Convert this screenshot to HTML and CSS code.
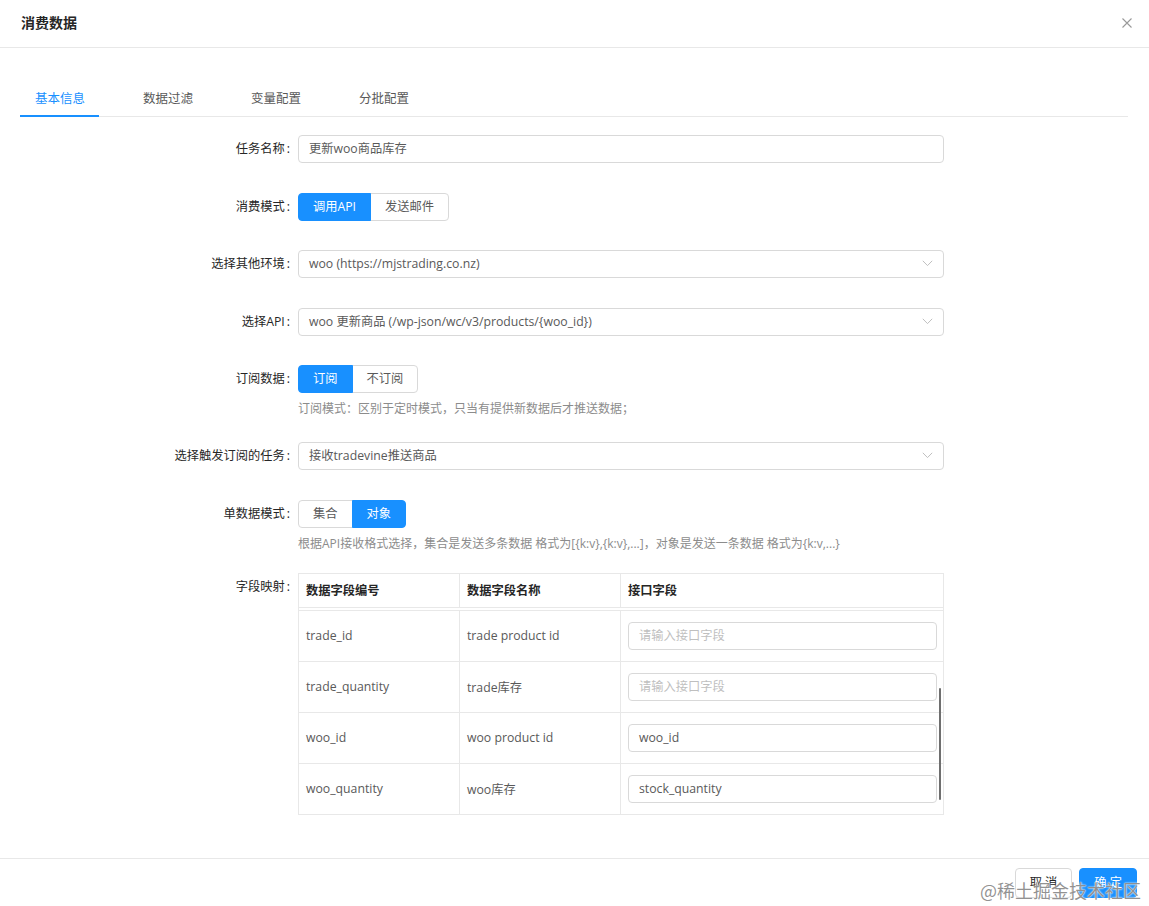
FILE: index.html
```html
<!DOCTYPE html>
<html lang="zh-CN">
<head>
<meta charset="utf-8">
<title>消费数据</title>
<link rel="stylesheet" href="styles.css">
</head>
<body>
<div class="modal">
  <div class="modal-header">
    <div class="modal-title">消费数据</div>
    <span class="modal-close" aria-label="close">
      <svg width="12" height="12" viewBox="0 0 12 12"><path d="M1.5 1.5 L10.5 10.5 M10.5 1.5 L1.5 10.5" stroke="#999" stroke-width="1.1" fill="none"/></svg>
    </span>
  </div>
  <div class="modal-body">
    <div class="tabs">
      <div class="tab active">基本信息</div>
      <div class="tab">数据过滤</div>
      <div class="tab">变量配置</div>
      <div class="tab">分批配置</div>
    </div>
    <div class="form">
      <div class="form-item">
        <label class="form-label">任务名称</label>
        <div class="form-control">
          <div class="input">更新woo商品库存</div>
        </div>
      </div>
      <div class="form-item">
        <label class="form-label">消费模式</label>
        <div class="form-control">
          <div class="btn-group">
            <span class="rbtn checked">调用API</span><span class="rbtn">发送邮件</span>
          </div>
        </div>
      </div>
      <div class="form-item">
        <label class="form-label">选择其他环境</label>
        <div class="form-control">
          <div class="input select">woo (https://mjstrading.co.nz)<span class="arrow"><svg width="11" height="7" viewBox="0 0 11 7"><path d="M0.8 0.8 L5.5 5.6 L10.2 0.8" stroke="#bfbfbf" stroke-width="1" fill="none"/></svg></span></div>
        </div>
      </div>
      <div class="form-item">
        <label class="form-label">选择API</label>
        <div class="form-control">
          <div class="input select">woo 更新商品 (/wp-json/wc/v3/products/{woo_id})<span class="arrow"><svg width="11" height="7" viewBox="0 0 11 7"><path d="M0.8 0.8 L5.5 5.6 L10.2 0.8" stroke="#bfbfbf" stroke-width="1" fill="none"/></svg></span></div>
        </div>
      </div>
      <div class="form-item with-help">
        <label class="form-label">订阅数据</label>
        <div class="form-control">
          <div class="btn-group">
            <span class="rbtn checked">订阅</span><span class="rbtn">不订阅</span>
          </div>
          <div class="help">订阅模式：区别于定时模式，只当有提供新数据后才推送数据；</div>
        </div>
      </div>
      <div class="form-item">
        <label class="form-label">选择触发订阅的任务</label>
        <div class="form-control">
          <div class="input select">接收tradevine推送商品<span class="arrow"><svg width="11" height="7" viewBox="0 0 11 7"><path d="M0.8 0.8 L5.5 5.6 L10.2 0.8" stroke="#bfbfbf" stroke-width="1" fill="none"/></svg></span></div>
        </div>
      </div>
      <div class="form-item with-help tight">
        <label class="form-label">单数据模式</label>
        <div class="form-control">
          <div class="btn-group">
            <span class="rbtn">集合</span><span class="rbtn checked">对象</span>
          </div>
          <div class="help">根据API接收格式选择，集合是发送多条数据 格式为[{k:v},{k:v},...]，对象是发送一条数据 格式为{k:v,...}</div>
        </div>
      </div>
      <div class="form-item">
        <label class="form-label label-top">字段映射</label>
        <div class="form-control">
          <div class="table">
            <div class="trow thead">
              <div class="cell">数据字段编号</div>
              <div class="cell">数据字段名称</div>
              <div class="cell">接口字段</div>
            </div>
            <div class="tbody">
              <div class="sliver"></div>
              <div class="trow">
                <div class="cell">trade_id</div>
                <div class="cell">trade product id</div>
                <div class="cell"><div class="input small placeholder">请输入接口字段</div></div>
              </div>
              <div class="trow">
                <div class="cell">trade_quantity</div>
                <div class="cell">trade库存</div>
                <div class="cell"><div class="input small placeholder">请输入接口字段</div></div>
              </div>
              <div class="trow">
                <div class="cell">woo_id</div>
                <div class="cell">woo product id</div>
                <div class="cell"><div class="input small">woo_id</div></div>
              </div>
              <div class="trow last">
                <div class="cell">woo_quantity</div>
                <div class="cell">woo库存</div>
                <div class="cell"><div class="input small">stock_quantity</div></div>
              </div>
              <div class="scroll-thumb"></div>
            </div>
          </div>
        </div>
      </div>
    </div>
  </div>
  <div class="modal-footer">
    <span class="btn">取 消</span>
    <span class="btn primary">确 定</span>
    <span class="watermark">@稀土掘金技术社区</span>
  </div>
</div>
</body>
</html>
```

FILE: styles.css
```css
* { box-sizing: border-box; }
html, body { margin: 0; padding: 0; background: #fff; }
body {
  font-family: "Open Sans", "Noto Sans CJK SC", sans-serif;
  font-size: 12.25px;
  color: #595959;
}
.modal {
  width: 1149px;
  height: 906px;
  display: flex;
  flex-direction: column;
  position: relative;
  overflow: hidden;
}
.modal-header {
  height: 48px;
  border-bottom: 1px solid #e8e8e8;
  padding: 0 21px;
  display: flex;
  align-items: center;
  justify-content: space-between;
  flex: none;
}
.modal-title {
  font-size: 14px;
  font-weight: bold;
  color: #262626;
  line-height: 20px;
  margin-top: -1px;
}
.modal-close {
  display: flex;
  margin-right: -5px;
  margin-top: -1px;
}
.modal-body {
  flex: 1;
  padding: 41px 21px 0 20px;
}
.tabs {
  display: flex;
  border-bottom: 1px solid #e8e8e8;
  gap: 29px;
}
.tab {
  padding: 0 15px 6px;
  line-height: 20px;
  font-size: 12.5px;
  color: #595959;
  width: 79px;
  text-align: center;
  white-space: nowrap;
  border-bottom: 2px solid transparent;
  margin-bottom: -1px;
}
.tab.active {
  color: #1890ff;
  border-bottom-color: #1890ff;
}
.form {
  padding-top: 18px;
}
.form-item {
  display: grid;
  grid-template-columns: 278px 646px;
  margin-bottom: 29.5px;
}
.form-item.with-help { margin-bottom: 23px; }
.form-item.tight { margin-bottom: 19px; }
.form-label {
  text-align: right;
  line-height: 28px;
  color: #262626;
  white-space: nowrap;
}
.form-label::after {
  content: ":";
  margin: 0 8px 0 2px;
}
.input {
  height: 28px;
  border: 1px solid #d9d9d9;
  border-radius: 4px;
  padding: 0 10px;
  line-height: 26px;
  color: #595959;
  position: relative;
  white-space: nowrap;
}
.input.placeholder { color: #bfbfbf; }
.select .arrow {
  position: absolute;
  right: 10px;
  top: 9px;
  display: flex;
}
.btn-group {
  display: flex;
  height: 28px;
}
.rbtn {
  height: 28px;
  line-height: 26px;
  padding: 0 14px;
  border: 1px solid #d9d9d9;
  color: #595959;
  background: #fff;
  margin-left: -1px;
}
.rbtn:first-child { border-radius: 4px 0 0 4px; margin-left: 0; }
.rbtn:last-child { border-radius: 0 4px 4px 0; }
.rbtn.checked {
  background: #1890ff;
  border-color: #1890ff;
  color: #fff;
  position: relative;
}
.help {
  margin-top: 6px;
  line-height: 20px;
  font-size: 12px;
  color: #8c8c8c;
  white-space: nowrap;
}
.table {
  border: 1px solid #e8e8e8;
  width: 646px;
}
.trow {
  display: grid;
  grid-template-columns: 161px 161px 1fr;
  height: 51px;
  border-bottom: 1px solid #e8e8e8;
}
.trow.last { border-bottom: none; height: 50px; }
.thead {
  height: 34px;
  font-weight: bold;
  color: #262626;
}
.cell {
  border-right: 1px solid #e8e8e8;
  padding: 0 6px 0 7px;
  display: flex;
  align-items: center;
}
.cell:last-child { border-right: none; }
.thead .cell { padding-bottom: 1px; }
.tbody {
  position: relative;
}
.sliver {
  height: 3px;
  border-bottom: 1px solid #e8e8e8;
}
.input.small { width: 100%; }
.scroll-thumb {
  position: absolute;
  right: 2px;
  top: 80px;
  width: 2px;
  height: 112px;
  background: #6f6f6f;
  border-radius: 1px;
}
.modal-footer {
  flex: none;
  height: 48px;
  border-top: 1px solid #e8e8e8;
  padding: 9px 12px 0;
  display: flex;
  justify-content: flex-end;
  align-items: flex-start;
  gap: 7px;
  position: relative;
}
.btn {
  height: 30px;
  line-height: 28px;
  padding: 0 14px;
  border: 1px solid #d9d9d9;
  border-radius: 4px;
  color: #262626;
  background: #fff;
  white-space: pre;
}
.btn.primary {
  background: #1890ff;
  border-color: #1890ff;
  color: #fff;
}
.watermark {
  position: absolute;
  right: 8px;
  bottom: 4px;
  font-size: 18px;
  line-height: 24px;
  color: rgba(110, 110, 110, 0.75);
  font-family: "Noto Sans CJK SC", sans-serif;
  text-shadow: 0 0 1px #fff, 0 0 2px #fff;
  pointer-events: none;
}
```
